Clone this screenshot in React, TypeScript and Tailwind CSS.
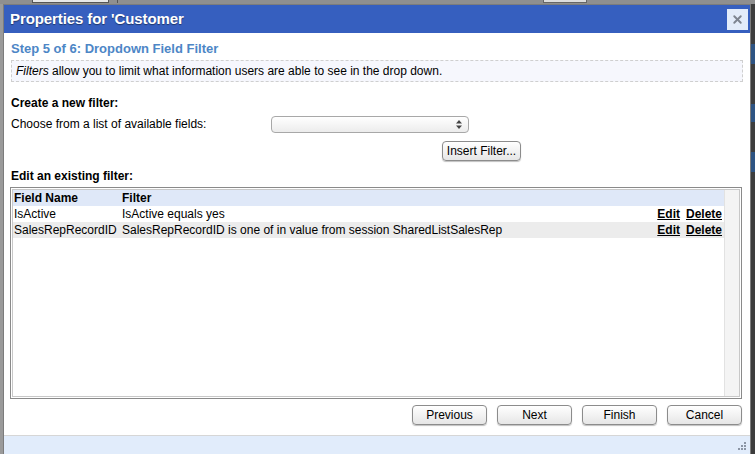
import { X } from "lucide-react";

const rows = [
  { field: "IsActive", filter: "IsActive equals yes", bg: "bg-white" },
  {
    field: "SalesRepRecordID",
    filter: "SalesRepRecordID is one of in value from session SharedListSalesRep",
    bg: "bg-[#ececec]",
  },
];

function MacButton({ label, className }: { label: string; className?: string }) {
  return (
    <button
      type="button"
      className={`flex h-[20px] items-center justify-center rounded-[4px] border border-[#8c8c8c] bg-gradient-to-b from-white to-[#e6e6e6] text-[12px] leading-none text-black shadow-[0_1px_1px_rgba(0,0,0,0.25)] ${className ?? ""}`}
    >
      {label}
    </button>
  );
}

export default function App() {
  return (
    <div className="flex h-[454px] w-[755px] flex-col overflow-hidden bg-[#8f8f8f] font-['Liberation_Sans',Arial,sans-serif]">
      {/* background app strip */}
      <div className="relative h-[4px] shrink-0">
        <div className="absolute left-[32px] top-[-10px] h-[13px] w-[77px] border border-[#555] bg-[#e8e8e8]" />
        <div className="absolute left-[117px] top-[-10px] h-[13px] w-[80px] border-l border-[#555]" />
        <div className="absolute left-[543px] top-[-6px] h-[9px] w-[44px] border border-[#666] bg-[#ddd]" />
      </div>

      <div className="flex min-h-0 flex-1">
        {/* left edge */}
        <div className="w-[3px] shrink-0 bg-[#9a9a9a]" />

        {/* dialog */}
        <div className="flex w-[748px] shrink-0 flex-col border-x border-t border-[#7c7c7c] bg-white">
          <div className="flex h-[28px] shrink-0 items-center justify-between bg-[#365fbf] pl-[6px] pr-[2px]">
            <span className="text-[15px] font-bold tracking-[-0.1px] text-white [text-shadow:0_1px_1px_rgba(0,0,0,0.45)]">
              Properties for 'Customer
            </span>
            <div className="flex h-[21px] w-[21px] items-center justify-center bg-[#e3ecfa]">
              <X size={13} strokeWidth={3.5} className="text-[#7e8590]" />
            </div>
          </div>

          <div className="flex min-h-0 flex-1 flex-col px-[7px] pt-[8px]">
            <div className="text-[13px] font-bold leading-[15px] text-[#4d86c6]">
              Step 5 of 6: Dropdown Field Filter
            </div>
            <div className="mt-[4px] flex h-[22px] items-center border border-dashed border-[#cfcfcf] bg-[#f6f7fd] pl-[4px] text-[12px] text-black">
              <i>Filters</i>&nbsp;allow you to limit what information users are able to see in the drop down.
            </div>

            <div className="mt-[14px] text-[12px] font-bold leading-[15px] text-black">Create a new filter:</div>
            <div className="mt-[4px] flex items-center text-[12px] text-black">
              <span className="w-[260px]">Choose from a list of available fields:</span>
              <div className="flex h-[17px] w-[198px] items-center justify-end rounded-[4px] border border-[#a8a8a8] bg-gradient-to-b from-white to-[#ececec] pr-[6px]">
                <svg width="6" height="9" viewBox="0 0 6 9">
                  <path d="M3 0 L6 3.5 H0 Z M0 5.5 H6 L3 9 Z" fill="#444" />
                </svg>
              </div>
            </div>
            <div className="mt-[8px] flex justify-end pr-[222px]">
              <MacButton label="Insert Filter..." className="w-[79px]" />
            </div>

            <div className="mt-[8px] text-[12px] font-bold leading-[15px] text-black">Edit an existing filter:</div>

            <div className="-ml-[1px] mt-[3px] mr-[1px] h-[212px] border border-[#8a8a8a] p-[1px]">
              <div className="flex h-full border border-[#c8c8c8]">
                <div className="flex-1 text-[12px] leading-[16px] text-black">
                  <div className="flex h-[16px] bg-[#dfe8f8] font-bold">
                    <span className="w-[109px] pl-[1px]">Field Name</span>
                    <span>Filter</span>
                  </div>
                  {rows.map((r) => (
                    <div key={r.field} className={`flex h-[16px] ${r.bg}`}>
                      <span className="w-[109px] pl-[1px]">{r.field}</span>
                      <span className="flex-1">{r.filter}</span>
                      <span className="flex gap-[6px] pr-[2px] font-bold underline">
                        <span>Edit</span>
                        <span>Delete</span>
                      </span>
                    </div>
                  ))}
                </div>
                <div className="w-[15px] border-l border-[#e2e2e2] bg-[#f4f4f4]" />
              </div>
            </div>

            <div className="mt-[6px] flex justify-end gap-[10px] pr-[1px]">
              <MacButton label="Previous" className="w-[75px]" />
              <MacButton label="Next" className="w-[75px]" />
              <MacButton label="Finish" className="w-[75px]" />
              <MacButton label="Cancel" className="w-[75px]" />
            </div>
          </div>

          <div className="relative mt-auto h-[19px] shrink-0 border-t border-[#d6d6d6] bg-[#e1ecfb]">
            <svg className="absolute bottom-[3px] right-[3px]" width="10" height="10" viewBox="0 0 10 10">
              <rect x="7" y="1" width="2" height="2" fill="#8b95a5" />
              <rect x="4" y="4" width="2" height="2" fill="#8b95a5" />
              <rect x="7" y="4" width="2" height="2" fill="#8b95a5" />
              <rect x="1" y="7" width="2" height="2" fill="#8b95a5" />
              <rect x="4" y="7" width="2" height="2" fill="#8b95a5" />
              <rect x="7" y="7" width="2" height="2" fill="#8b95a5" />
            </svg>
          </div>
        </div>

        {/* right edge: background app */}
        <div className="flex flex-1 flex-col bg-[#3d3d3d]">
          <div className="h-[40px]" />
          <div className="h-[20px] bg-[#2d5382]" />
          <div className="h-[40px]" />
          <div className="h-[18px] bg-[#2d5382]" />
          <div className="h-[30px]" />
          <div className="h-[20px] bg-[#2d5382]" />
        </div>
      </div>
    </div>
  );
}
